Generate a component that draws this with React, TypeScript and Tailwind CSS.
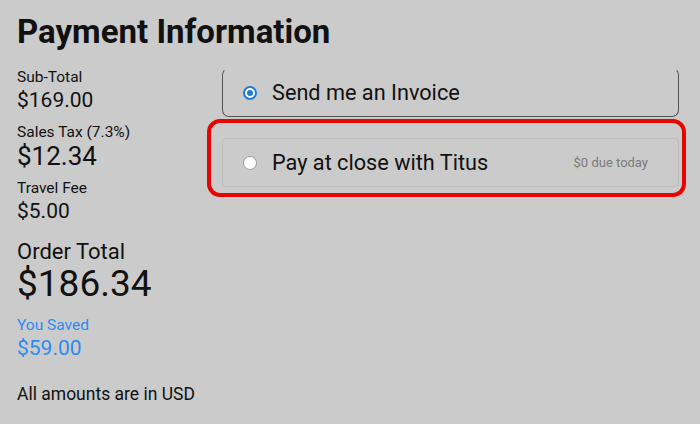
import { useState } from 'react';

type Option = { id: string; label: string; note?: string };

const options: Option[] = [
  { id: 'invoice', label: 'Send me an Invoice' },
  { id: 'titus', label: 'Pay at close with Titus', note: '$0 due today' },
];

const Radio = ({ checked }: { checked: boolean }) =>
  checked ? (
    <span className="flex h-[14px] w-[14px] shrink-0 items-center justify-center rounded-full border-2 border-[#1f7ad9] bg-white">
      <span className="h-[6px] w-[6px] rounded-full bg-[#1f7ad9]" />
    </span>
  ) : (
    <span className="h-[14px] w-[14px] shrink-0 rounded-full border border-[#999] bg-white" />
  );

const App = () => {
  const [method, setMethod] = useState('invoice');

  return (
    <div className="min-h-[424px] w-[700px] bg-[#cbcbcb] px-[17px] pt-[13px] font-['Roboto',sans-serif] text-[#111]">
      <h1 className="text-[33px] font-bold leading-[38px]">Payment Information</h1>

      <div className="mt-[17px] flex">
        <div className="w-[205px] shrink-0">
          <p className="text-[15.5px] leading-[18px]">Sub-Total</p>
          <p className="mt-[2px] text-[21px] leading-[24px]">$169.00</p>

          <p className="mt-[11px] text-[15.5px] leading-[18px]">Sales Tax (7.3%)</p>
          <p className="text-[26px] leading-[30px]">$12.34</p>

          <p className="mt-[8px] text-[15.5px] leading-[18px]">Travel Fee</p>
          <p className="mt-[2px] text-[21px] leading-[24px]">$5.00</p>

          <p className="mt-[16px] text-[22px] leading-[26px]">Order Total</p>
          <p className="text-[37px] leading-[38px]">$186.34</p>

          <p className="mt-[13px] text-[15.5px] leading-[18px] text-[#2b8cf0]">You Saved</p>
          <p className="mt-[2px] text-[21px] leading-[24px] text-[#2b8cf0]">$59.00</p>

          <p className="mt-[23px] text-[17.5px] leading-[22px]">All amounts are in USD</p>
        </div>

        <div className="mr-[4px] flex flex-1 flex-col gap-[21px]">
          {options.map((o) => {
            const checked = method === o.id;
            return (
              <div key={o.id} className="relative">
                <button
                  type="button"
                  onClick={() => setMethod(o.id)}
                  className={
                    checked
                      ? 'flex h-[49px] w-full items-center rounded-[7px] border-[1.5px] border-[#555] border-t-transparent pl-[20px] pr-[30px] text-left'
                      : 'flex h-[49px] w-full items-center rounded-[4px] border border-[#bdbdbd] pl-[20px] pr-[30px] text-left'
                  }
                >
                  <Radio checked={checked} />
                  <span className="ml-[15px] flex-1 text-[21.7px] leading-[26px]">{o.label}</span>
                  {o.note && <span className="text-[13px] text-[#7a7a7a]">{o.note}</span>}
                </button>
                {o.id === 'titus' && (
                  <div className="pointer-events-none absolute -top-[19px] -bottom-[10px] -left-[15px] -right-[7px] rounded-[13px] border-4 border-[#e60505]" />
                )}
              </div>
            );
          })}
        </div>
      </div>
    </div>
  );
};

export default App;
